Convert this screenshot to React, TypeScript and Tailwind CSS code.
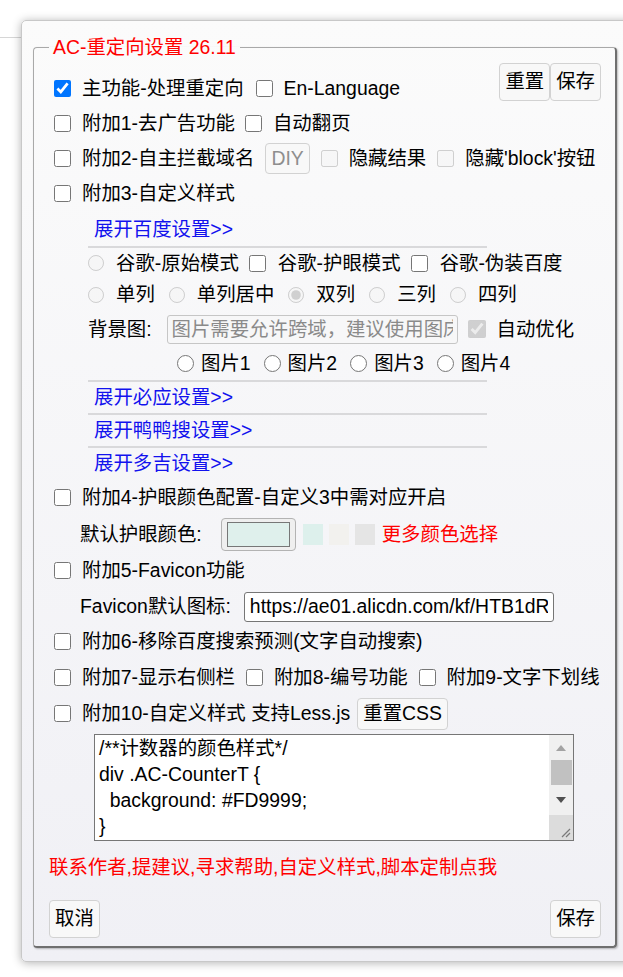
import React from 'react'

type OptProps = {
  label: string
  checked?: boolean
  disabled?: boolean
  radio?: boolean
  size?: string
  gap?: string
}

function Opt({ label, checked, disabled, radio, size = 'w-[17px] h-[17px]', gap = 'ml-[11px]' }: OptProps) {
  return (
    <label className="flex shrink-0 items-center whitespace-nowrap">
      <input
        type={radio ? 'radio' : 'checkbox'}
        defaultChecked={checked}
        disabled={disabled}
        className={`m-0 shrink-0 ${size}`}
      />
      <span className={gap}>{label}</span>
    </label>
  )
}

function Btn({ children, h = 'h-[38px]', muted }: { children: React.ReactNode; h?: string; muted?: boolean }) {
  return (
    <button
      className={`${h} shrink-0 rounded-[4px] border border-[#d2d2d2] bg-[#f8f8f8] px-[5px] leading-none ${
        muted ? 'text-[#8e8e8e]' : 'text-black'
      }`}
    >
      {children}
    </button>
  )
}

function Hr() {
  return <div className="h-[2px] w-[399px] bg-[#d9d9db]" />
}

function LinkRow({ text, h }: { text: string; h: string }) {
  return <div className={`flex ${h} items-center pl-[6px] text-[#1212ee]`}>{text}</div>
}

const css = `/**计数器的颜色样式*/
div .AC-CounterT {
  background: #FD9999;
}
/**计数器的字体颜色*/
div .AC-CounterT {
  color: #FFFFFF;
}
/**右侧栏样式*/
.AC-Right {
  width: 300px;
}`

export default function App() {
  return (
    <div className="relative h-[977px] w-full overflow-hidden bg-white font-['Liberation_Sans','Noto_Sans_CJK_SC',sans-serif] text-[19.4px] text-black">
      {/* page behind the dialog */}
      <div className="h-[38px] border-b border-[#d6d6d6]" />

      {/* settings dialog */}
      <div className="absolute left-[21px] top-[20px] w-[620px] rounded-[5px] border border-[#c8c8c8] bg-gradient-to-b from-[#fbfbfb] to-[#f0f0f5] pb-[13px] pl-[11px] pt-[15px] shadow-[0_1px_10px_rgba(0,0,0,0.3)]">
        <fieldset className="w-[584px] rounded-[4px] border-t border-l border-r-2 border-b-2 border-t-[#a9a9a9] border-l-[#a9a9a9] border-r-[#6f6f6f] border-b-[#6f6f6f] pb-[8px] pr-[14px] shadow-[1px_1px_2px_rgba(0,0,0,0.25)]">
          <legend className="ml-[15px] px-[4px] leading-[22px] text-[#ff0000]">AC-重定向设置 26.11</legend>

          <div className="pl-[15px] pt-[5px]">
            {/* row 1 */}
            <div className="flex items-start justify-between">
              <div className="mt-[8px] flex h-[35px] items-center gap-[12px] pl-[5px]">
                <Opt checked label="主功能-处理重定向" />
                <Opt label="En-Language" />
              </div>
              <div className="flex">
                <Btn>重置</Btn>
                <Btn>保存</Btn>
              </div>
            </div>

            <div className="flex h-[35px] items-center gap-[10px] pl-[5px]">
              <Opt label="附加1-去广告功能" />
              <Opt label="自动翻页" />
            </div>

            <div className="flex h-[35px] items-center gap-[11px] pl-[5px]">
              <Opt label="附加2-自主拦截域名" />
              <Btn h="h-[31px]" muted>
                DIY
              </Btn>
              <Opt disabled label="隐藏结果" />
              <Opt disabled label="隐藏'block'按钮" />
            </div>

            <div className="flex h-[35px] items-center pl-[5px]">
              <Opt label="附加3-自定义样式" />
            </div>

            {/* search engine sub settings */}
            <div className="ml-[39px]">
              <LinkRow text="展开百度设置>>" h="h-[35px] pt-[3px]" />
              <Hr />
              <div className="flex h-[31px] items-center gap-[10px]">
                <Opt radio disabled label="谷歌-原始模式" size="w-[16px] h-[16px]" gap="ml-[12px]" />
                <Opt label="谷歌-护眼模式" gap="ml-[12px]" />
                <Opt label="谷歌-伪装百度" gap="ml-[12px]" />
              </div>
              <div className="flex h-[32px] items-center gap-[14px]">
                <Opt radio disabled label="单列" size="w-[16px] h-[16px]" gap="ml-[12px]" />
                <Opt radio disabled label="单列居中" size="w-[16px] h-[16px]" gap="ml-[12px]" />
                <Opt radio disabled checked label="双列" size="w-[16px] h-[16px]" gap="ml-[12px]" />
                <Opt radio disabled label="三列" size="w-[16px] h-[16px]" gap="ml-[12px]" />
                <Opt radio disabled label="四列" size="w-[16px] h-[16px]" gap="ml-[12px]" />
              </div>
              <div className="flex h-[37px] items-center whitespace-nowrap">
                <span>背景图:</span>
                <input
                  disabled
                  placeholder="图片需要允许跨域，建议使用图床上传"
                  className="ml-[15px] h-[29px] w-[291px] shrink-0 rounded-[3px] border border-[#c6c6c6] bg-[#f7f7f8] px-[4px] placeholder:text-[#8a8a8a]"
                />
                <div className="ml-[10px]">
                  <Opt disabled checked label="自动优化" size="w-[18px] h-[18px]" />
                </div>
              </div>
              <div className="flex h-[32px] items-center gap-[13px] pl-[89px]">
                <Opt radio label="图片1" gap="ml-[7px]" />
                <Opt radio label="图片2" gap="ml-[7px]" />
                <Opt radio label="图片3" gap="ml-[7px]" />
                <Opt radio label="图片4" gap="ml-[7px]" />
              </div>
              <Hr />
              <LinkRow text="展开必应设置>>" h="h-[31px]" />
              <Hr />
              <LinkRow text="展开鸭鸭搜设置>>" h="h-[31px]" />
              <Hr />
              <LinkRow text="展开多吉设置>>" h="h-[32px]" />
            </div>

            <div className="flex h-[36px] items-center pl-[5px]">
              <Opt label="附加4-护眼颜色配置-自定义3中需对应开启" />
            </div>

            <div className="flex h-[37px] items-center whitespace-nowrap pl-[31px]">
              <span>默认护眼颜色:</span>
              <div className="ml-[19px] flex h-[33px] w-[75px] items-center justify-center rounded-[4px] border border-[#b3b3b3] bg-[#efefef]">
                <div className="h-[25px] w-[63px] border border-[#777777] bg-[#dff0ec]" />
              </div>
              <div className="ml-[7px] flex gap-[6px]">
                <div className="h-[21px] w-[20px] bg-[#ddf0ec]" />
                <div className="h-[21px] w-[20px] bg-[#f2f1ee]" />
                <div className="h-[21px] w-[20px] bg-[#e5e5e5]" />
              </div>
              <span className="ml-[7px] text-[#ff0000]">更多颜色选择</span>
            </div>

            <div className="flex h-[36px] items-center pl-[5px]">
              <Opt label="附加5-Favicon功能" />
            </div>

            <div className="flex h-[35px] items-center whitespace-nowrap pl-[31px]">
              <span>Favicon默认图标:</span>
              <input
                defaultValue="https://ae01.alicdn.com/kf/HTB1dRYWXvb2gK0jSZK9q6yEgFXaS.jpg"
                className="ml-[13px] h-[30px] w-[310px] shrink-0 rounded-[3px] border border-[#767676] bg-white px-[5px] text-black"
              />
            </div>

            <div className="flex h-[36px] items-center pl-[5px]">
              <Opt label="附加6-移除百度搜索预测(文字自动搜索)" />
            </div>

            <div className="flex h-[36px] items-center gap-[11px] pl-[5px]">
              <Opt label="附加7-显示右侧栏" />
              <Opt label="附加8-编号功能" />
              <Opt label="附加9-文字下划线" />
            </div>

            <div className="flex h-[36px] items-center gap-[7px] pl-[5px]">
              <Opt label="附加10-自定义样式 支持Less.js" />
              <Btn h="h-[32px]">重置CSS</Btn>
            </div>

            {/* custom css editor */}
            <div className="relative ml-[45px] mt-[2px] h-[107px] w-[480px]">
              <textarea
                defaultValue={css}
                spellCheck={false}
                className="block h-full w-full resize-none overflow-hidden border border-[#767676] bg-white pl-[4px] pr-[26px] leading-[26px] text-black"
              />
              <div className="absolute bottom-[1px] right-[1px] top-[1px] flex w-[24px] flex-col">
                <div className="relative h-[80px] bg-[#f0f0f0]">
                  <svg className="absolute left-[7px] top-[10px]" width="10" height="6" viewBox="0 0 10 6">
                    <path d="M0 6 L5 0 L10 6 Z" fill="#a3a3a3" />
                  </svg>
                  <div className="absolute left-[2px] top-[25px] h-[25px] w-[21px] bg-[#c1c1c1]" />
                  <svg className="absolute left-[7px] top-[62px]" width="10" height="6" viewBox="0 0 10 6">
                    <path d="M0 0 L10 0 L5 6 Z" fill="#505050" />
                  </svg>
                </div>
                <div className="relative flex-1 bg-[#dcdcdc]">
                  <svg className="absolute bottom-[2px] right-[2px]" width="12" height="12" viewBox="0 0 12 12">
                    <path d="M11 3 L3 11 M11 7 L7 11" stroke="#7a7a7a" strokeWidth="1.2" />
                  </svg>
                </div>
              </div>
            </div>

            <div className="mt-[11px] flex h-[32px] items-center whitespace-nowrap text-[#ff0000]">
              联系作者,提建议,寻求帮助,自定义样式,脚本定制点我
            </div>

            <div className="mt-[16px] flex justify-between">
              <Btn>取消</Btn>
              <Btn>保存</Btn>
            </div>
          </div>
        </fieldset>
      </div>
    </div>
  )
}
